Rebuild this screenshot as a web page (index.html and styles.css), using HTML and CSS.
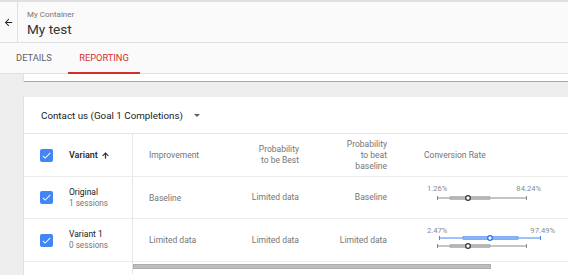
FILE: index.html
```html
<!doctype html>
<html>
  <head>
    <title>My test - Reporting</title>
    <meta name="viewport" content="width=device-width, initial-scale=1.0"/>
    <link rel="stylesheet" href="styles.css">
  </head>
  <body>

    <div class="top-strip"></div>

    <header class="appbar">
      <div class="back">
        <svg viewBox="0 0 24 24" width="11" height="11"><path d="M20 11H7.83l5.59-5.59L12 4l-8 8 8 8 1.41-1.41L7.83 13H20v-2z" fill="#212121"/></svg>
      </div>
      <div class="titles">
        <div class="crumb">My Container</div>
        <div class="title">My test</div>
      </div>
    </header>

    <nav class="tabs">
      <div class="tab tab-details">Details</div>
      <div class="tab tab-reporting active">Reporting</div>
    </nav>

    <main class="content">
      <div class="card card-prev"></div>

      <section class="card report">
        <div class="goal">
          <span>Contact us (Goal 1 Completions)</span>
          <span class="caret"></span>
        </div>

        <div class="grid">
          <!-- header -->
          <div class="cell first head">
            <span class="check"><svg viewBox="0 0 24 24" width="11" height="11"><path d="M9 16.17L4.83 12l-1.42 1.41L9 19 21 7l-1.41-1.41z" fill="#fff"/></svg></span>
            <span class="variant-head">Variant</span>
            <svg class="sort" viewBox="0 0 24 24" width="9" height="9"><path d="M4 12l1.41 1.41L11 7.83V20h2V7.83l5.58 5.59L20 12l-8-8-8 8z" fill="#212121" stroke="#212121" stroke-width="1"/></svg>
          </div>
          <div class="cell head">Improvement</div>
          <div class="cell head right">Probability<br>to be Best</div>
          <div class="cell head right">Probability<br>to beat<br>baseline</div>
          <div class="cell head conv">Conversion Rate</div>

          <!-- original -->
          <div class="cell first">
            <span class="check"><svg viewBox="0 0 24 24" width="11" height="11"><path d="M9 16.17L4.83 12l-1.42 1.41L9 19 21 7l-1.41-1.41z" fill="#fff"/></svg></span>
            <div class="name">
              <div>Original</div>
              <div class="sessions">1 sessions</div>
            </div>
          </div>
          <div class="cell">Baseline</div>
          <div class="cell right">Limited data</div>
          <div class="cell right">Baseline</div>
          <div class="cell chart">
            <svg width="150" height="41">
              <text x="0" y="14" class="lbl">1.26%</text>
              <text x="114" y="14" class="lbl" text-anchor="end">84.24%</text>
              <line x1="10" y1="21" x2="100" y2="21" stroke="#8a8a8a"/>
              <line x1="10.5" y1="19" x2="10.5" y2="23" stroke="#8a8a8a"/>
              <line x1="99.5" y1="19" x2="99.5" y2="23" stroke="#8a8a8a"/>
              <rect x="23" y="19.5" width="40" height="3" fill="#b5b5b5" stroke="#9e9e9e" stroke-width="0.5"/>
              <circle cx="41" cy="21" r="2.3" fill="#fff" stroke="#333" stroke-width="1.2"/>
            </svg>
          </div>

          <!-- variant 1 -->
          <div class="cell first">
            <span class="check"><svg viewBox="0 0 24 24" width="11" height="11"><path d="M9 16.17L4.83 12l-1.42 1.41L9 19 21 7l-1.41-1.41z" fill="#fff"/></svg></span>
            <div class="name">
              <div>Variant 1</div>
              <div class="sessions">0 sessions</div>
            </div>
          </div>
          <div class="cell">Limited data</div>
          <div class="cell right">Limited data</div>
          <div class="cell right">Limited data</div>
          <div class="cell chart">
            <svg width="150" height="41">
              <text x="0" y="14" class="lbl">2.47%</text>
              <text x="128" y="14" class="lbl" text-anchor="end">97.49%</text>
              <line x1="12" y1="19" x2="114" y2="19" stroke="#4285f4"/>
              <line x1="12.5" y1="17" x2="12.5" y2="21" stroke="#4285f4"/>
              <line x1="113.5" y1="17" x2="113.5" y2="21" stroke="#4285f4"/>
              <rect x="36" y="17.5" width="55" height="3" fill="#8ab4f8" stroke="#4285f4" stroke-width="0.5"/>
              <circle cx="63" cy="19" r="2.3" fill="#fff" stroke="#1a73e8" stroke-width="1.2"/>

              <line x1="10" y1="27" x2="100" y2="27" stroke="#8a8a8a"/>
              <line x1="10.5" y1="25" x2="10.5" y2="29" stroke="#8a8a8a"/>
              <line x1="99.5" y1="25" x2="99.5" y2="29" stroke="#8a8a8a"/>
              <rect x="23" y="25.5" width="40" height="3" fill="#b5b5b5" stroke="#9e9e9e" stroke-width="0.5"/>
              <circle cx="41" cy="27" r="2.3" fill="#fff" stroke="#333" stroke-width="1.2"/>
            </svg>
          </div>

          <!-- scrollbar -->
          <div class="scroll-spacer"></div>
          <div class="scrollbar"><div class="thumb"></div></div>
        </div>
      </section>
    </main>

  </body>
</html>
```

FILE: styles.css
```css
html {
  box-sizing: border-box;
}
*, *:before, *:after {
  box-sizing: inherit;
}

html, body {
  font-family: Roboto, "Liberation Sans", sans-serif;
  width: 100%;
  height: 100%;
  margin: 0;
  padding: 0;
  background-color: #eeeeee;
  overflow: hidden;
}

.top-strip {
  height: 2px;
  background-color: #e0e0e0;
}

/* app bar */
.appbar {
  display: flex;
  height: 41px;
  background-color: #fafafa;
  border-bottom: 1px solid #e0e0e0;
}
.back {
  width: 18px;
  display: flex;
  align-items: center;
  justify-content: center;
  border-right: 1px solid #e0e0e0;
}
.titles {
  padding: 7px 0 0 9px;
}
.crumb {
  font-size: 8px;
  line-height: 11px;
  color: #757575;
}
.title {
  font-size: 13.6px;
  line-height: 18px;
  color: #333333;
}

/* tabs */
.tabs {
  display: flex;
  height: 31px;
  background-color: #fafafa;
  border-bottom: 1px solid #e0e0e0;
}
.tab {
  font-size: 9.3px;
  text-transform: uppercase;
  color: #616161;
  display: flex;
  align-items: center;
  justify-content: center;
  border-bottom: 2px solid transparent;
  margin-bottom: -1px;
}
.tab-details {
  width: 68px;
}
.tab-reporting {
  width: 72px;
}
.tab.active {
  color: #d32f2f;
  border-bottom-color: #d32f2f;
}

/* cards */
.content {
  padding-left: 24px;
}
.card {
  background-color: #fff;
  box-shadow: -1px 0 0 #e0e0e0;
}
.card-prev {
  height: 8px;
  border-bottom: 1px solid #a8a8a8;
  margin-bottom: 15px;
}
.report {
  overflow: hidden;
  height: 200px;
}

.goal {
  display: flex;
  align-items: center;
  height: 37px;
  padding-left: 17px;
  font-size: 9.8px;
  color: #212121;
  border-bottom: 1px solid #e6e6e6;
}
.caret {
  margin-left: 11px;
  width: 0;
  height: 0;
  border-left: 3px solid transparent;
  border-right: 3px solid transparent;
  border-top: 3px solid #616161;
}

/* table */
.grid {
  display: grid;
  grid-template-columns: 109px 102px 80px 88px 200px;
  grid-template-rows: 43px 42px 43px 12px;
}
.cell {
  display: flex;
  align-items: center;
  padding-left: 16px;
  font-size: 8.5px;
  color: #757575;
  border-bottom: 1px solid #ececec;
  white-space: nowrap;
}
.cell.first {
  border-right: 1px solid #e6e6e6;
  color: #212121;
}
.cell.right {
  justify-content: flex-end;
  text-align: right;
  padding-left: 0;
  padding-right: 16px;
  line-height: 11px;
}
.cell.conv {
  padding-left: 21px;
}
.cell.chart {
  align-items: flex-start;
  padding-left: 24px;
}
.lbl {
  font-family: Roboto, "Liberation Sans", sans-serif;
  font-size: 7.6px;
  fill: #8a8a8a;
}

.check {
  width: 13px;
  height: 13px;
  border-radius: 2px;
  background-color: #4285f4;
  display: flex;
  align-items: center;
  justify-content: center;
  margin-right: 16px;
  flex-shrink: 0;
}
.variant-head {
  font-size: 9px;
  font-weight: 500;
  color: #212121;
}
.sort {
  margin-left: 3px;
}
.name {
  font-size: 8.5px;
  line-height: 11px;
}
.sessions {
  font-size: 8.2px;
  color: #757575;
}

.scroll-spacer {
  border-right: 1px solid #e6e6e6;
}
.scrollbar {
  grid-column: 2 / 6;
  padding-top: 2px;
}
.thumb {
  width: 358px;
  height: 5px;
  background-color: #bdbdbd;
  border: 1px solid #adadad;
}
```
